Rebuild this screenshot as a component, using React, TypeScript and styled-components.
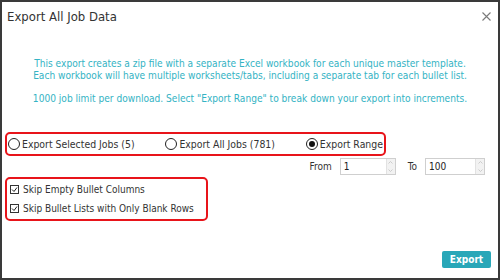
import styled, { createGlobalStyle } from 'styled-components'

const GlobalStyle = createGlobalStyle`
  body {
    margin: 0;
    font-family: "DejaVu Sans Condensed", "DejaVu Sans", sans-serif;
    background: #fff;
  }
`

const Dialog = styled.div`
  width: 500px;
  height: 280px;
  box-sizing: border-box;
  border: 2px solid #3a3a3a;
  background: #fff;
  display: flex;
  flex-direction: column;
  color: #333;
`

const Header = styled.div`
  display: flex;
  justify-content: space-between;
  align-items: center;
  height: 25px;
  padding: 2px 6px 0 5px;
`

const Title = styled.h2`
  margin: 0;
  font-size: 13px;
  font-weight: normal;
  color: #333;
`

const CloseButton = styled.button`
  border: 0;
  background: none;
  padding: 0;
  width: 12px;
  height: 12px;
  display: flex;
  align-items: center;
  justify-content: center;
  cursor: pointer;
`

const Intro = styled.div`
  margin-top: 29px;
  text-align: center;
  font-size: 10.1px;
  line-height: 11.5px;
  color: #34b3c4;
`

const IntroLine = styled.p<{ $gap?: boolean }>`
  margin: 0;
  margin-top: ${(p) => (p.$gap ? '11.5px' : '0')};
`

const RadioGroup = styled.div`
  margin: 28px 0 0 3px;
  width: 381px;
  height: 24px;
  box-sizing: border-box;
  border: 2px solid #e8141a;
  border-radius: 5px;
  display: flex;
  align-items: center;
  justify-content: space-between;
  padding: 0 1px;
`

const Choice = styled.label<{ $size?: number }>`
  display: flex;
  align-items: center;
  gap: 2px;
  font-size: ${(p) => p.$size ?? 10}px;
  color: #333;
`

const RadioMark = styled.span<{ $on?: boolean }>`
  width: 12px;
  height: 12px;
  box-sizing: border-box;
  border: 1px solid #222;
  border-radius: 50%;
  display: flex;
  align-items: center;
  justify-content: center;

  &::after {
    content: '';
    width: 6px;
    height: 6px;
    border-radius: 50%;
    background: ${(p) => (p.$on ? '#111' : 'transparent')};
  }
`

const RangeRow = styled.div`
  display: flex;
  align-items: center;
  justify-content: flex-end;
  gap: 8px;
  margin-top: 2px;
  padding-right: 13px;
  font-size: 10px;
  color: #333;
`

const RangeLabel = styled.span<{ $pad: number }>`
  margin-left: ${(p) => p.$pad}px;
`

const NumberBox = styled.div<{ $w: number }>`
  width: ${(p) => p.$w}px;
  height: 17px;
  box-sizing: border-box;
  border: 1px solid #cfcfcf;
  display: flex;
  align-items: center;
  justify-content: space-between;
  padding-left: 3px;
  font-size: 10px;
  color: #222;
`

const Spinner = styled.span`
  width: 8px;
  height: 15px;
  background: #f2f2f2;
  border-left: 1px solid #e2e2e2;
  display: flex;
  flex-direction: column;
  align-items: center;
  justify-content: space-around;
`

const CheckGroup = styled.div`
  margin: 2px 0 0 3px;
  width: 203px;
  height: 44px;
  box-sizing: border-box;
  border: 2px solid #e8141a;
  border-radius: 5px;
  display: flex;
  flex-direction: column;
  justify-content: center;
  gap: 8px;
  padding-left: 3px;
`

const CheckMark = styled.span`
  width: 9px;
  height: 9px;
  box-sizing: border-box;
  border: 1px solid #333;
  display: flex;
  align-items: center;
  justify-content: center;
  margin-right: 2px;
`

const Footer = styled.div`
  margin-top: auto;
  display: flex;
  justify-content: flex-end;
  padding: 0 7px 10px 0;
`

const ExportButton = styled.button`
  width: 49px;
  height: 17px;
  border: 0;
  border-radius: 2px;
  background: #29a7b8;
  color: #fff;
  font-family: inherit;
  font-size: 10px;
  font-weight: bold;
  padding: 0;
`

const Chevron = ({ up }: { up?: boolean }) => (
  <svg width="5" height="3" viewBox="0 0 5 3">
    <path d={up ? 'M0.5 2.5 L2.5 0.5 L4.5 2.5' : 'M0.5 0.5 L2.5 2.5 L4.5 0.5'} fill="none" stroke="#c2c2c2" strokeWidth="0.8" />
  </svg>
)

const NumberInput = ({ value, width }: { value: string; width: number }) => (
  <NumberBox $w={width}>
    <span>{value}</span>
    <Spinner>
      <Chevron up />
      <Chevron />
    </Spinner>
  </NumberBox>
)

const Tick = () => (
  <CheckMark>
    <svg width="7" height="7" viewBox="0 0 7 7">
      <path d="M1 3.5 L3 5.5 L6 1.5" fill="none" stroke="#222" strokeWidth="1" />
    </svg>
  </CheckMark>
)

export default function App() {
  return (
    <>
      <GlobalStyle />
      <Dialog>
        <Header>
          <Title>Export All Job Data</Title>
          <CloseButton aria-label="Close">
            <svg width="9" height="9" viewBox="0 0 9 9">
              <path d="M0.5 0.5 L8.5 8.5 M8.5 0.5 L0.5 8.5" stroke="#7a7a7a" strokeWidth="1.1" />
            </svg>
          </CloseButton>
        </Header>
        <Intro>
          <IntroLine>This export creates a zip file with a separate Excel workbook for each unique master template.</IntroLine>
          <IntroLine>Each workbook will have multiple worksheets/tabs, including a separate tab for each bullet list.</IntroLine>
          <IntroLine $gap>1000 job limit per download. Select "Export Range" to break down your export into increments.</IntroLine>
        </Intro>
        <RadioGroup>
          <Choice $size={10.4}>
            <RadioMark />
            Export Selected Jobs (5)
          </Choice>
          <Choice $size={10.4}>
            <RadioMark />
            Export All Jobs (781)
          </Choice>
          <Choice $size={10.4}>
            <RadioMark $on />
            Export Range
          </Choice>
        </RadioGroup>
        <RangeRow>
          <RangeLabel $pad={0}>From</RangeLabel>
          <NumberInput value="1" width={56} />
          <RangeLabel $pad={4}>To</RangeLabel>
          <NumberInput value="100" width={60} />
        </RangeRow>
        <CheckGroup>
          <Choice>
            <Tick />
            Skip Empty Bullet Columns
          </Choice>
          <Choice>
            <Tick />
            Skip Bullet Lists with Only Blank Rows
          </Choice>
        </CheckGroup>
        <Footer>
          <ExportButton>Export</ExportButton>
        </Footer>
      </Dialog>
    </>
  )
}
